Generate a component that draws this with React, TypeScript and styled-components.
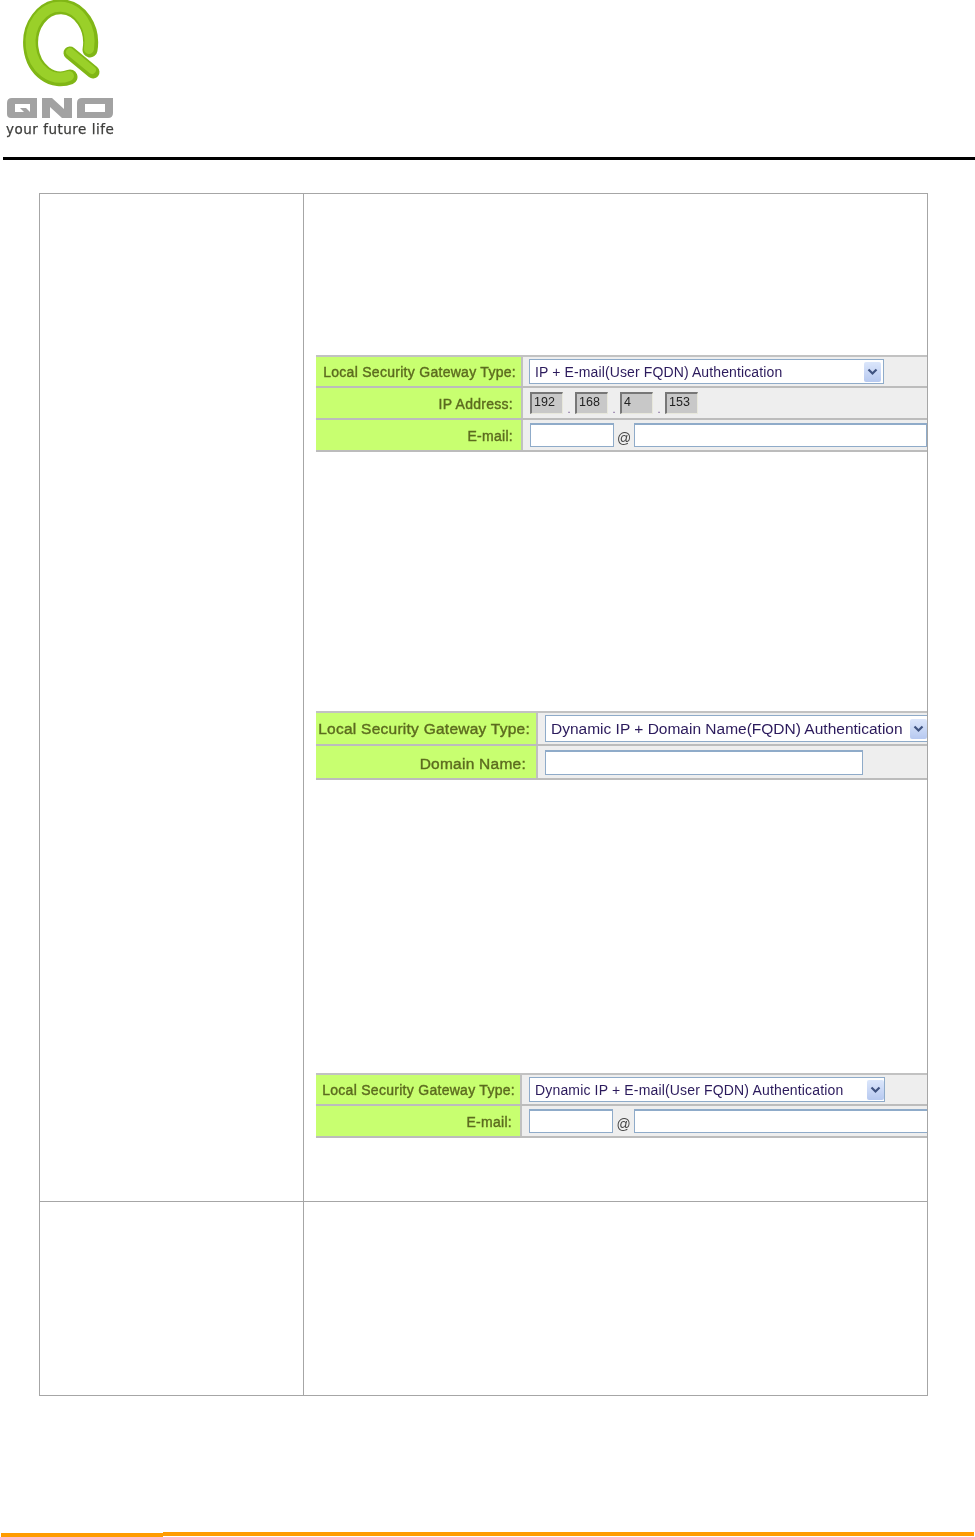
import React from "react";
import styled, { createGlobalStyle } from "styled-components";

const Global = createGlobalStyle`
  html, body { margin: 0; padding: 0; background: #fff; }
  body { font-family: "Liberation Sans", Arial, sans-serif; }
`;

const Page = styled.div`
  position: relative;
  width: 975px;
  height: 1537px;
  display: flex;
  flex-direction: column;
  overflow: hidden;
`;

const Header = styled.header`
  height: 157px;
  margin-left: 3px;
  border-bottom: 3px solid #000;
  flex: none;
`;

const LogoBox = styled.div`
  width: 118px;
  height: 140px;
  position: relative;
  filter: blur(0.5px);
`;

const Tagline = styled.div`
  position: absolute;
  left: 3px;
  top: 120px;
  font-family: "DejaVu Sans", sans-serif;
  font-size: 13.5px;
  line-height: 18px;
  color: #3e3e3c;
  white-space: nowrap;
  letter-spacing: 0.5px;
  -webkit-text-stroke: 0.25px #3e3e3c;
`;

const Outer = styled.section`
  margin: 33px 0 0 39px;
  width: 889px;
  box-sizing: border-box;
  border: 1px solid #a6a6a6;
  display: grid;
  grid-template-columns: 264px 1fr;
  grid-template-rows: 1008px 193px;
  flex: none;
`;

const SideCell = styled.div<{ $top?: boolean }>`
  border-right: 1px solid #a6a6a6;
  ${(p) => (p.$top ? "border-bottom: 1px solid #a6a6a6;" : "")}
`;

const MainCell = styled.div<{ $top?: boolean }>`
  padding-left: 12px;
  display: flex;
  flex-direction: column;
  overflow: hidden;
  min-width: 0;
  ${(p) => (p.$top ? "border-bottom: 1px solid #a6a6a6;" : "")}
`;

const Form = styled.div<{ $gap: number }>`
  margin-top: ${(p) => p.$gap}px;
  width: 611px;
  overflow: hidden;
  border-top: 2px solid #c2c2c2;
  filter: blur(0.35px);
  flex: none;
`;

const Row = styled.div<{ $label: number; $h: number }>`
  display: grid;
  grid-template-columns: ${(p) => p.$label}px 1fr;
  height: ${(p) => p.$h}px;
  box-sizing: border-box;
  border-bottom: 2px solid #bcbcbc;
  background: #eeeeee;
`;

const Label = styled.div<{ $size: number; $pad: number; $drop?: number }>`
  background: #c8ff70;
  border-right: 2px solid #c0c0c0;
  color: #5c6b1f;
  font-size: ${(p) => p.$size}px;
  font-weight: 400;
  letter-spacing: ${(p) => (p.$size > 14.5 ? "0.25px" : "0.28px")};
  -webkit-text-stroke: 0.4px #5c6b1f;
  display: flex;
  align-items: center;
  justify-content: flex-end;
  padding-right: ${(p) => p.$pad}px;
  padding-top: ${(p) => p.$drop ?? 0}px;
  white-space: nowrap;
`;

const Field = styled.div<{ $pad: number }>`
  display: flex;
  align-items: center;
  padding-left: ${(p) => p.$pad}px;
  min-width: 0;
  overflow: hidden;
`;

const SelectBox = styled.div<{ $w: number; $h: number; $size: number; $end: number; $track: number }>`
  width: ${(p) => p.$w}px;
  height: ${(p) => p.$h}px;
  flex: none;
  box-sizing: border-box;
  background: #fff;
  border: 1px solid #8fabc9;
  display: flex;
  align-items: center;
  justify-content: space-between;
  color: #2b1a5c;
  font-size: ${(p) => p.$size}px;
  letter-spacing: ${(p) => p.$track}px;
  padding: 0 ${(p) => p.$end}px 0 5px;
  white-space: nowrap;
`;

const Arrow = styled.span`
  width: 17px;
  height: 20px;
  flex: none;
  border-radius: 2px;
  background: linear-gradient(180deg, #dbe6fb, #b7c9f0);
  display: flex;
  align-items: center;
  justify-content: center;
`;

const IpBox = styled.div`
  width: 33px;
  height: 22px;
  flex: none;
  box-sizing: border-box;
  background: #c8c8c8;
  border-style: solid;
  border-width: 2px 1px 1px 2px;
  border-color: #777 #e8e8dc #e8e8dc #777;
  color: #222;
  font-size: 12.5px;
  line-height: 17px;
  padding-left: 2px;
`;

const Dot = styled.span`
  width: 12px;
  flex: none;
  text-align: center;
  align-self: flex-end;
  color: #6a4a8a;
  font-size: 11px;
  line-height: 18px;
`;

const TextBox = styled.div<{ $w: number; $h: number; $open?: boolean }>`
  width: ${(p) => p.$w}px;
  height: ${(p) => p.$h}px;
  flex: none;
  box-sizing: border-box;
  background: #fff;
  border: 1px solid #8fabc9;
  border-top-width: 2px;
  ${(p) => (p.$open ? "border-right: none;" : "")}
`;

const At = styled.span<{ $w: number }>`
  width: ${(p) => p.$w}px;
  flex: none;
  text-align: center;
  color: #444;
  font-size: 14px;
  padding-top: 5px;
`;

const BottomBar = styled.footer`
  position: absolute;
  top: 1532px;
  left: 1px;
  width: 973px;
  height: 5px;
  display: flex;
`;

const BarPart = styled.div<{ $w: number; $offset: number }>`
  flex: ${(p) => (p.$w ? `0 0 ${p.$w}px` : "1")};
  background: #ff9c00;
  height: 4px;
  margin-top: ${(p) => p.$offset}px;
`;

const Chevron = () => (
  <svg width="11" height="8" viewBox="0 0 11 8" aria-hidden="true">
    <path d="M1.5 1.5 L5.5 5.5 L9.5 1.5" fill="none" stroke="#3f5380" strokeWidth="2.2" />
  </svg>
);

const Logo = () => (
  <LogoBox>
    <svg width="118" height="120" viewBox="3 0 118 120" aria-hidden="true">
      <path d="M 90 50 A 30 36 0 1 0 70 77" fill="none" stroke="#80b616" strokeWidth="15" strokeLinecap="round" />
      <path d="M 89 49 A 29.5 35.5 0 1 0 69 76" fill="none" stroke="#9ad029" strokeWidth="10" strokeLinecap="round" />
      <path d="M 70 53 L 93 72" fill="none" stroke="#80b616" strokeWidth="13" strokeLinecap="round" />
      <path d="M 70 52 L 92 70" fill="none" stroke="#9ad029" strokeWidth="8" strokeLinecap="round" />
      <g fill="#a2a2a2" fillRule="evenodd">
        <path d="M 12 98 H 37 V 118 H 11 Q 7 118 7 114 V 103 Q 7 98 12 98 Z M 15 104 V 112 H 24 L 20 108 H 26 L 30 112 V 104 Z" />
        <path d="M 42 118 V 98 H 52 L 64 109 V 98 H 72 V 118 H 62 L 50 107 V 118 Z" />
        <path d="M 82 98 H 113 V 113 Q 113 118 108 118 H 77 V 103 Q 77 98 82 98 Z M 85 104 V 112 H 105 V 104 Z" />
      </g>
    </svg>
    <Tagline>your future life</Tagline>
  </LogoBox>
);

const App = () => (
  <Page>
    <Global />
    <Header>
      <Logo />
    </Header>
    <Outer>
      <SideCell $top />
      <MainCell $top>
        <Form $gap={161}>
          <Row $label={207} $h={31}>
            <Label $size={14} $pad={5}>Local Security Gateway Type:</Label>
            <Field $pad={6}>
              <SelectBox $w={355} $h={25} $size={14} $end={2} $track={0.12}>
                IP + E-mail(User FQDN) Authentication
                <Arrow><Chevron /></Arrow>
              </SelectBox>
            </Field>
          </Row>
          <Row $label={207} $h={32}>
            <Label $size={14} $pad={8} $drop={2}>IP Address:</Label>
            <Field $pad={7}>
              <IpBox>192</IpBox><Dot>.</Dot>
              <IpBox>168</IpBox><Dot>.</Dot>
              <IpBox>4</IpBox><Dot>.</Dot>
              <IpBox>153</IpBox>
            </Field>
          </Row>
          <Row $label={207} $h={32}>
            <Label $size={14} $pad={8} $drop={2}>E-mail:</Label>
            <Field $pad={7}>
              <TextBox $w={84} $h={24} />
              <At $w={20}>@</At>
              <TextBox $w={293} $h={24} />
            </Field>
          </Row>
        </Form>
        <Form $gap={259}>
          <Row $label={222} $h={33}>
            <Label $size={15.5} $pad={6}>Local Security Gateway Type:</Label>
            <Field $pad={7}>
              <SelectBox $w={383} $h={27} $size={15.5} $end={0} $track={0}>
                Dynamic IP + Domain Name(FQDN) Authentication
                <Arrow><Chevron /></Arrow>
              </SelectBox>
            </Field>
          </Row>
          <Row $label={222} $h={34}>
            <Label $size={15.5} $pad={10} $drop={3}>Domain Name:</Label>
            <Field $pad={7}>
              <TextBox $w={318} $h={25} />
            </Field>
          </Row>
        </Form>
        <Form $gap={293}>
          <Row $label={206} $h={31}>
            <Label $size={14} $pad={5}>Local Security Gateway Type:</Label>
            <Field $pad={7}>
              <SelectBox $w={356} $h={25} $size={14} $end={0} $track={0.16}>
                Dynamic IP + E-mail(User FQDN) Authentication
                <Arrow><Chevron /></Arrow>
              </SelectBox>
            </Field>
          </Row>
          <Row $label={206} $h={32}>
            <Label $size={14} $pad={8} $drop={2}>E-mail:</Label>
            <Field $pad={7}>
              <TextBox $w={84} $h={24} />
              <At $w={21}>@</At>
              <TextBox $w={294} $h={24} $open />
            </Field>
          </Row>
        </Form>
      </MainCell>
      <SideCell />
      <MainCell />
    </Outer>
    <BottomBar>
      <BarPart $w={162} $offset={1} />
      <BarPart $w={407} $offset={0} />
      <BarPart $w={0} $offset={0} />
    </BottomBar>
  </Page>
);

export default App;
